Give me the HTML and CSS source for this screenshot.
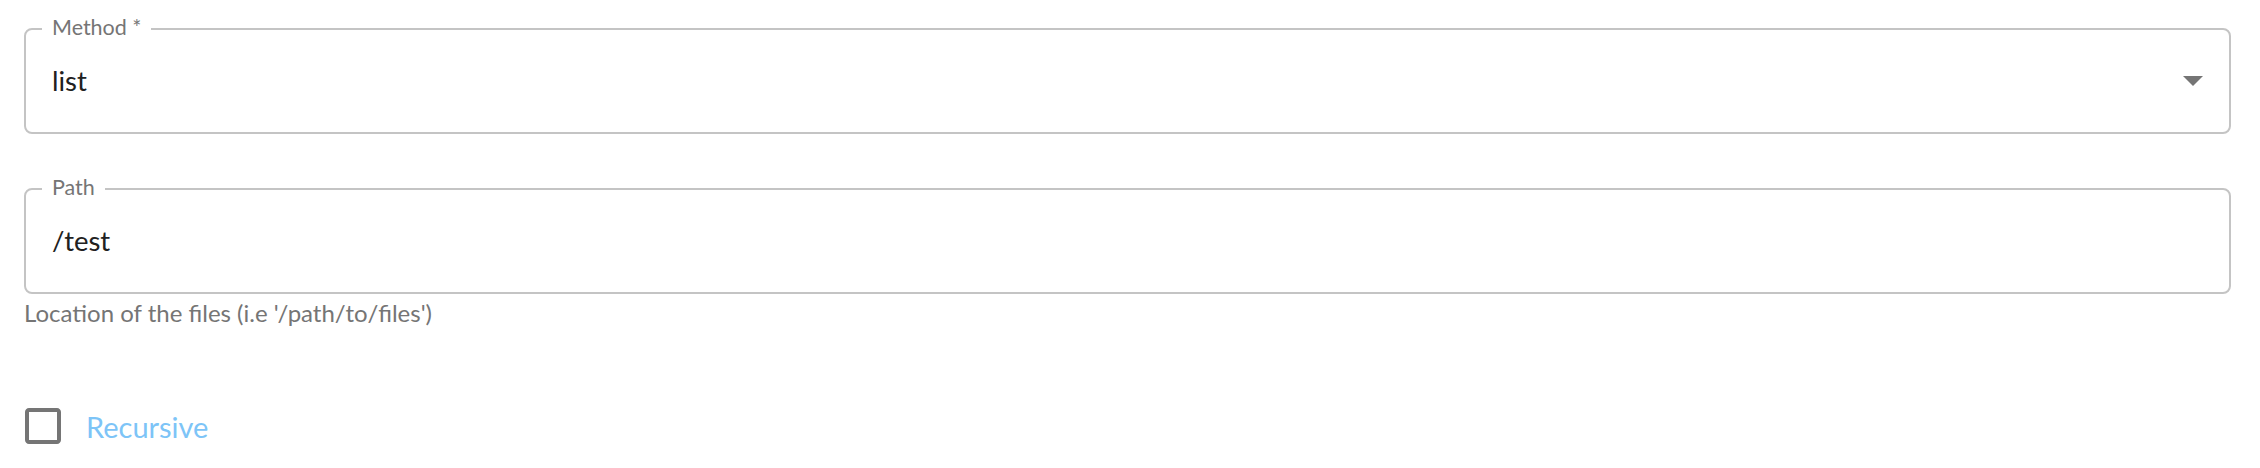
FILE: index.html
```html
<!DOCTYPE html>
<html lang="en">
<head>
<meta charset="utf-8">
<title>Form</title>
<link rel="stylesheet" href="styles.css">
</head>
<body>
<form class="form">
  <div class="outlined">
    <span class="legend">Method *</span>
    <span class="value">list</span>
    <svg class="arrow" width="20" height="10" viewBox="0 0 20 10"><path d="M0 0h20L10 10z" fill="#757575"/></svg>
  </div>
  <div class="outlined second">
    <span class="legend">Path</span>
    <span class="value">/test</span>
  </div>
  <p class="helper">Location of the files (i.e '/path/to/files')</p>
  <label class="check">
    <svg class="box" width="48" height="48" viewBox="0 0 24 24"><path fill="#757575" d="M19 5v14H5V5h14m0-2H5c-1.11 0-2 .9-2 2v14c0 1.1.89 2 2 2h14c1.1 0 2-.9 2-2V5c0-1.1-.9-2-2-2z"/></svg>
    <span class="check-label">Recursive</span>
  </label>
</form>
</body>
</html>
```
FILE: styles.css
```css
html, body {
  margin: 0;
  background: #fff;
}
body {
  font-family: Lato, "Noto Sans", sans-serif;
}
.form {
  display: flex;
  flex-direction: column;
  padding: 28px 29px 0 24px;
}
.outlined {
  position: relative;
  box-sizing: border-box;
  height: 106px;
  border: 2px solid #c4c4c4;
  border-radius: 8px;
  display: flex;
  align-items: center;
  padding: 0 26px 0 26px;
}
.second {
  margin-top: 54px;
}
.legend {
  position: absolute;
  top: -14px;
  left: 16px;
  padding: 0 10px;
  background: #fff;
  font-size: 21.5px;
  line-height: 22px;
  color: #757575;
}
.value {
  flex: 1;
  font-size: 27.5px;
  line-height: 34px;
  color: #212121;
}
.helper {
  margin: 7px 0 0 0;
  font-size: 24px;
  line-height: 24px;
  color: #757575;
}
.check {
  display: flex;
  align-items: center;
  margin-top: 77px;
}
.box {
  margin-left: -5px;
}
.check-label {
  margin-left: 19px;
  font-size: 29px;
  color: #7dc4f7;
}
```
